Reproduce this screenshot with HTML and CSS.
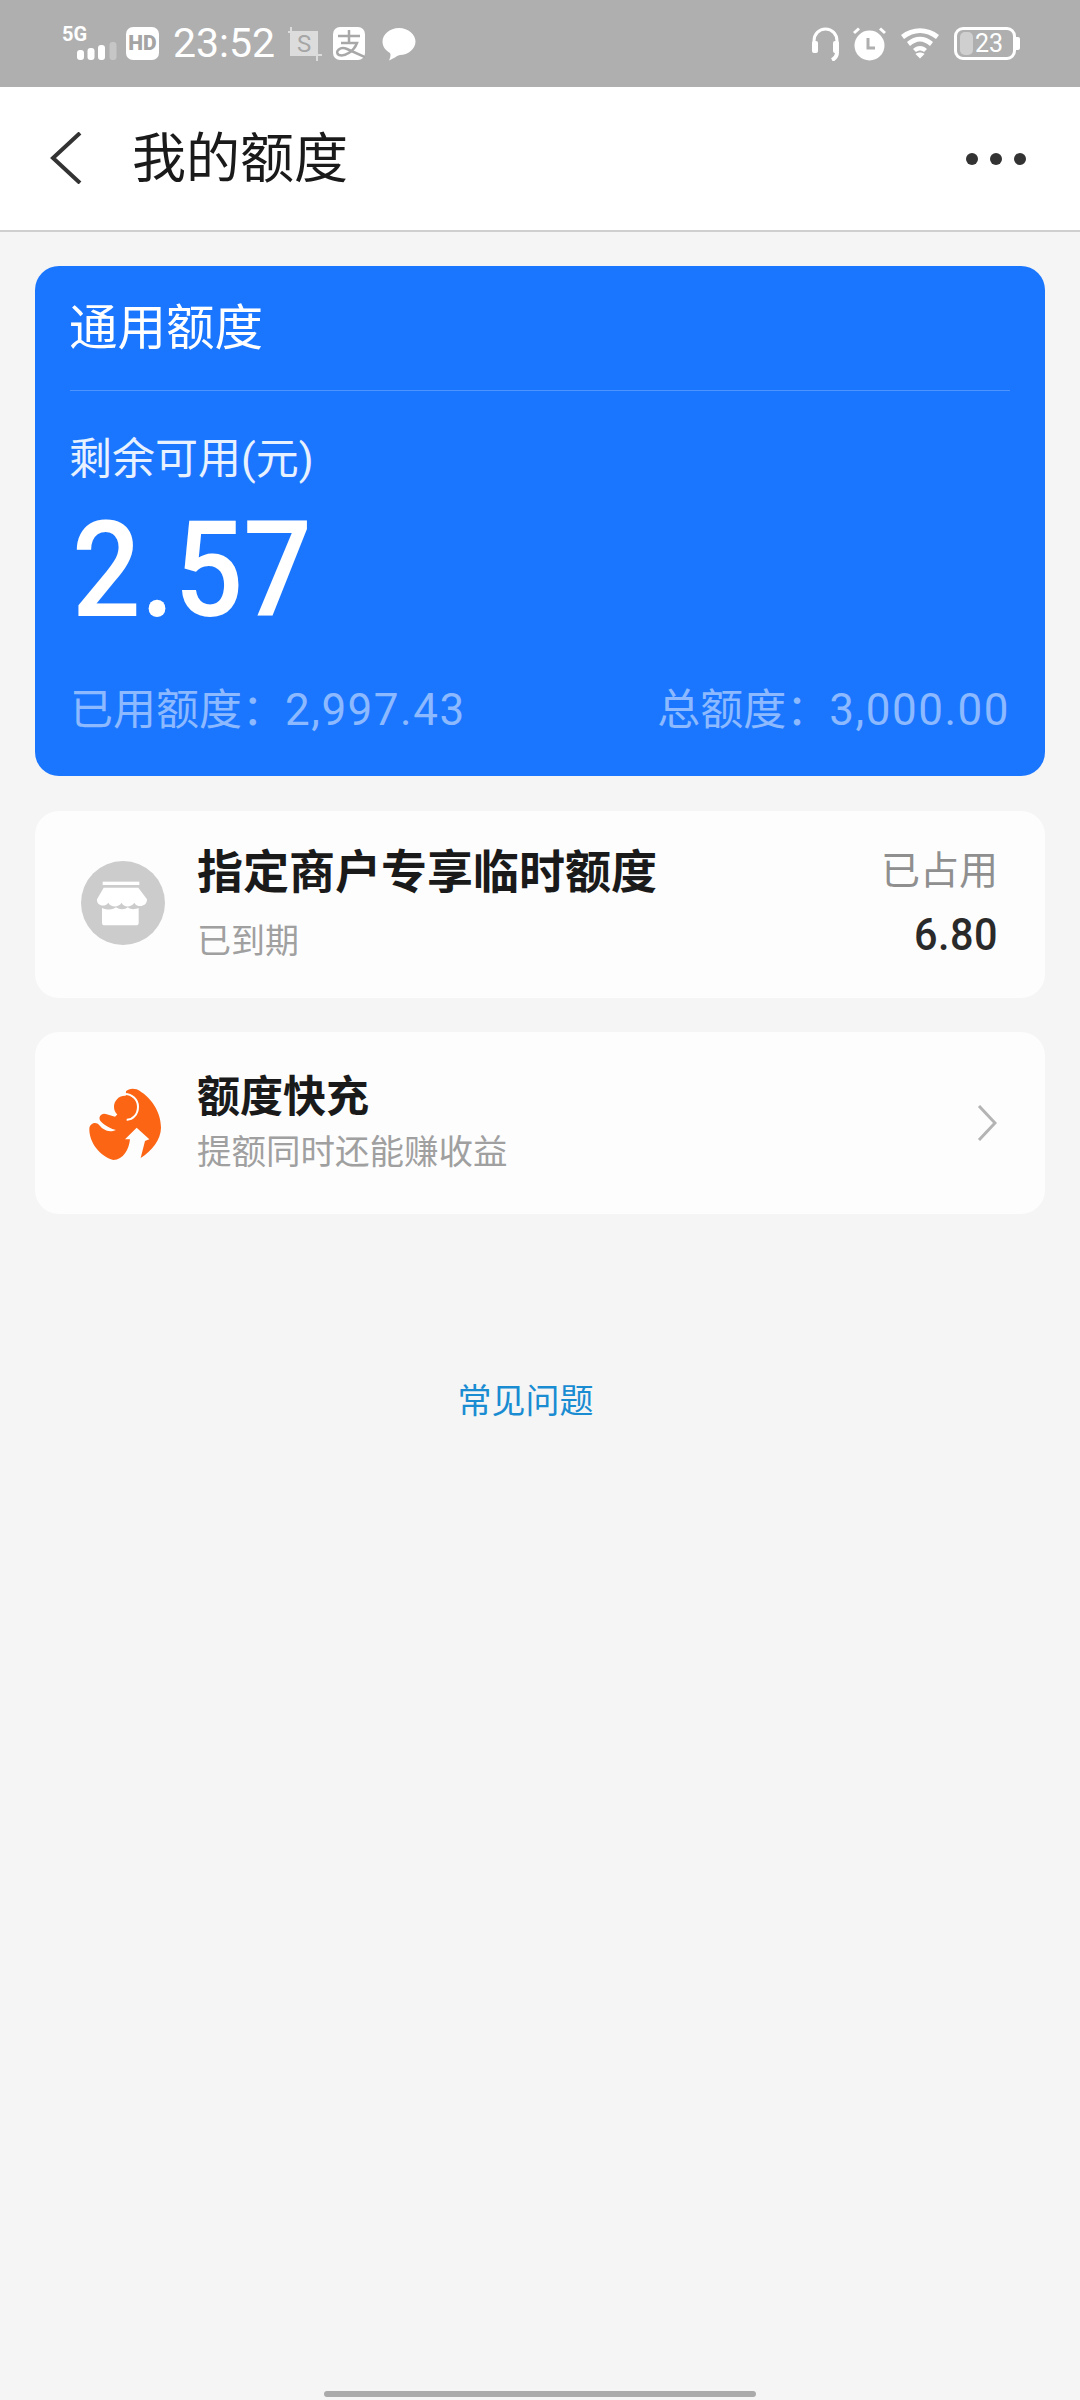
FILE: index.html
```html
<!DOCTYPE html>
<html lang="zh-CN">
<head>
    <meta charset="UTF-8">
    <meta name="viewport" content="width=device-width, initial-scale=1.0">
    <title>我的额度</title>
    <link rel="stylesheet" href="styles.css">
</head>
<body>
<div class="page">

    <!-- 状态栏 -->
    <div class="status">
        <div class="status-left">
            <div class="net">
                <span class="net-label">5G</span>
                <svg class="net-bars" width="40" height="18" viewBox="0 0 40 18">
                    <rect x="0" y="8" width="7" height="10" rx="3" fill="#fff"/>
                    <rect x="10.500" y="6" width="7" height="12" rx="3" fill="#fff"/>
                    <rect x="21" y="3" width="7" height="15" rx="3" fill="#fff"/>
                    <rect x="32.500" y="0" width="7" height="18" rx="3" fill="#c6c6c6"/>
                </svg>
            </div>
            <span class="hd">HD</span>
            <span class="time">23:52</span>
            <svg class="crop" width="34" height="34" viewBox="0 0 34 34">
                <rect x="3" y="5" width="26" height="23" fill="#dcdcdc"/>
                <path d="M3 0V28H34M0 5H29V34" fill="none" stroke="#dcdcdc" stroke-width="2"/>
                <text x="16" y="25" text-anchor="middle" class="crop-s">S</text>
            </svg>
            <svg class="zfb" width="32" height="33" viewBox="0 0 32 33">
                <rect width="32" height="33" rx="7" fill="#fff"/>
                <path d="M5 9H27M16 3V16M8 16H24C21 24 12 30 6 28C1 25 7 19 14 22L32 30" fill="none" stroke="#a8a8a8" stroke-width="2.500"/>
            </svg>
            <svg class="bubble" width="34" height="34" viewBox="0 0 34 34">
                <path d="M17 1C26.500 1 33.500 7.500 33.500 14.500C33.500 22 26 28 18 28C16 28 13 31 7 33.500C8.500 30.500 9 27.500 8 26C3.500 23.500 0.500 19.500 0.500 14.500C0.500 7.500 7.500 1 17 1Z" fill="#fff"/>
            </svg>
        </div>
        <div class="status-right">
            <svg width="27" height="34" viewBox="0 0 27 34">
                <path d="M2 23V14C2 7 7 2 13.500 2S25 7 25 14V25" fill="none" stroke="#fff" stroke-width="3"/>
                <rect x="0" y="14" width="6" height="12" rx="2" fill="#fff"/>
                <rect x="21" y="14" width="6" height="12" rx="2" fill="#fff"/>
                <path d="M25 25C25 29 24 31 20 33" fill="none" stroke="#fff" stroke-width="4"/>
            </svg>
            <svg width="33" height="34" viewBox="0 0 33 34">
                <circle cx="16.500" cy="18.500" r="15" fill="#fff"/>
                <path d="M1 6L6 1.500M32 6L27 1.500" stroke="#fff" stroke-width="3"/>
                <path d="M15 11V21H22" fill="none" stroke="#afafaf" stroke-width="3"/>
            </svg>
            <svg width="40" height="32" viewBox="0 0 40 32">
                <path d="M1 8C12 -1 28 -1 39 8L36 12C26 4 14 4 4 12Z" fill="#fff"/>
                <path d="M7 15C15 8 25 8 33 15L30 19C23 13 17 13 10 19Z" fill="#fff"/>
                <path d="M13 22C17 18 23 18 27 22L24 25C21 23 19 23 16 25Z" fill="#fff"/>
                <path d="M15.500 27C18 25 22 25 24.500 27L20 31.500Z" fill="#fff"/>
            </svg>
            <div class="battery">
                <div class="battery-body">
                    <span class="battery-fill"></span>
                    <span class="battery-num">23</span>
                </div>
                <span class="battery-nub"></span>
            </div>
        </div>
    </div>

    <!-- 标题栏 -->
    <div class="appbar">
        <svg class="back" width="32" height="52" viewBox="0 0 32 52">
            <path d="M30 1L3 26L30 51" fill="none" stroke="#333" stroke-width="4"/>
        </svg>
        <span class="appbar-title">我的额度</span>
        <div class="dots"><i></i><i></i><i></i></div>
    </div>

    <div class="content">

        <div class="quota">
            <div class="quota-head">通用额度</div>
            <div class="quota-label">剩余可用(元)</div>
            <div class="quota-num">2.57</div>
            <div class="quota-foot">
                <span>已用额度：<b>2,997.43</b></span>
                <span>总额度：<b>3,000.00</b></span>
            </div>
        </div>

        <div class="card merchant">
            <svg class="shop" width="86" height="86" viewBox="72 62 258 258">
                <circle cx="198" cy="191" r="126" fill="#cccccc"/>
                <rect x="137" y="127" width="110" height="10" fill="#fff"/>
                <path d="M140 145H244L270 180C270 205 238 205 232 190C222 205 200 205 194 190C184 205 162 205 154 190C144 205 118 200 120 180Z" fill="#fff"/>
                <path d="M135 206C155 214 170 210 177 204C187 212 205 212 212 204C222 212 235 210 245 206V250Q245 258 237 258H143Q135 258 135 250Z" fill="#fff"/>
            </svg>
            <div class="card-text">
                <div class="merchant-title">指定商户专享临时额度</div>
                <div class="merchant-sub">已到期</div>
            </div>
            <div class="merchant-right">
                <div class="used-label">已占用</div>
                <div class="used-num">6.80</div>
            </div>
        </div>

        <div class="card quick">
            <svg class="logo" width="84" height="80" viewBox="0 0 252 240">
                <path d="M138 16C145 8 158 6 170 10C210 30 243 75 243 125C243 160 215 195 182 216L195 165L208 160L170 125L135 160L150 160C147 190 130 222 100 222C60 212 28 170 28 130C28 112 48 105 58 118C68 130 85 142 108 132C95 130 75 120 62 106C52 92 66 78 80 85L105 92L135 62Z" fill="#fb6514"/>
                <path d="M132 24C156 22 174 42 174 62C174 85 158 102 140 101" fill="none" stroke="#fff" stroke-width="6"/>
                <circle cx="135" cy="62" r="33" fill="#fb6514"/>
            </svg>
            <div class="card-text">
                <div class="quick-title">额度快充</div>
                <div class="quick-sub">提额同时还能赚收益</div>
            </div>
            <svg class="arrow" width="20" height="36" viewBox="0 0 20 36">
                <path d="M2 1L18 18L2 35" fill="none" stroke="#b4b4b4" stroke-width="3"/>
            </svg>
        </div>

        <div class="faq">常见问题</div>
    </div>

    <div class="home"></div>
</div>
</body>
</html>
```

FILE: styles.css
```css
* {
    box-sizing: border-box;
}
body {
    margin: 0;
    background-color: #f5f5f5;
    font-family: "Roboto", "Noto Sans CJK SC", sans-serif;
}
.page {
    width: 1080px;
    height: 2400px;
    display: flex;
    flex-direction: column;
}

/* 状态栏 */
.status {
    height: 87px;
    flex-shrink: 0;
    background-color: #afafaf;
    padding: 27px 60px 0 62px;
    display: flex;
    justify-content: space-between;
    align-items: flex-start;
}
.status-left {
    display: flex;
    align-items: flex-start;
}
.status-right {
    display: flex;
    align-items: flex-start;
    gap: 14px;
}
.net {
    width: 54px;
    height: 33px;
    display: flex;
    flex-direction: column;
    align-items: flex-start;
}
.net-label {
    font-weight: bold;
    font-size: 20px;
    line-height: 15px;
    color: #fff;
}
.net-bars {
    margin-left: 15px;
    flex-shrink: 0;
}
.hd {
    width: 33px;
    height: 33px;
    margin-left: 10px;
    border-radius: 7px;
    background-color: #fff;
    color: #a4a4a4;
    font-weight: 900;
    font-size: 21px;
    line-height: 33px;
    text-align: center;
}
.time {
    margin-left: 14px;
    font-size: 41px;
    line-height: 33px;
    color: #fff;
}
.crop {
    margin-left: 13px;
}
.crop-s {
    font-family: "Roboto", sans-serif;
    font-size: 24px;
    fill: #a6a6a6;
}
.zfb {
    margin-left: 11px;
}
.bubble {
    margin-left: 17px;
}
.battery {
    display: flex;
    align-items: center;
    height: 33px;
}
.battery-body {
    width: 62px;
    height: 33px;
    border: 3px solid #fff;
    border-radius: 9px;
    padding: 2px 3px;
    display: flex;
    align-items: center;
    gap: 2px;
}
.battery-fill {
    width: 13px;
    height: 23px;
    border-radius: 5px;
    background-color: #cfcfcf;
}
.battery-num {
    font-size: 25px;
    line-height: 23px;
    color: #fff;
}
.battery-nub {
    width: 4px;
    height: 13px;
    border-radius: 0 2px 2px 0;
    background-color: #fff;
}

/* 标题栏 */
.appbar {
    height: 145px;
    flex-shrink: 0;
    background-color: #fff;
    border-bottom: 2px solid #cfcfcf;
    padding: 0 54px 0 50px;
    display: flex;
    align-items: center;
}
.back {
    margin-top: -2px;
}
.appbar-title {
    margin: 2px 0 0 50px;
    font-size: 54px;
    line-height: 60px;
    color: #1a1a1a;
}
.dots {
    margin-left: auto;
    display: flex;
    gap: 12px;
}
.dots i {
    width: 12px;
    height: 12px;
    border-radius: 50%;
    background-color: #333;
}

/* 内容 */
.content {
    flex: 1;
    padding: 34px 35px 0;
    display: flex;
    flex-direction: column;
}
.quota {
    height: 510px;
    flex-shrink: 0;
    border-radius: 24px;
    background-color: #1a76ff;
    padding: 0 35px;
    color: #fff;
}
.quota-head {
    height: 125px;
    padding-top: 33px;
    border-bottom: 1px solid #4d94ff;
    font-size: 48.500px;
    line-height: 60px;
    text-indent: -1px;
}
.quota-label {
    margin-top: 43px;
    font-size: 43px;
    line-height: 50px;
    text-indent: -1px;
    color: #e8f1ff;
}
.quota-num {
    margin: 17px 0 0 2px;
    font-weight: 500;
    font-size: 133px;
    line-height: 140px;
    transform: scaleX(0.91);
    transform-origin: left;
}
.quota-foot {
    margin-top: 44px;
    display: flex;
    justify-content: space-between;
    font-size: 43px;
    line-height: 50px;
    color: #8cb9ff;
}
.quota-foot b {
    font-weight: normal;
    font-size: 44px;
    letter-spacing: 1.500px;
}
.card {
    margin-top: 35px;
    border-radius: 24px;
    background-color: #fdfdfd;
    display: flex;
    align-items: center;
    flex-shrink: 0;
}
.merchant {
    height: 187px;
    padding: 0 47px 0 46px;
}
.quick {
    margin-top: 34px;
    height: 182px;
    padding: 0 48px 0 45px;
}
.shop {
    margin-top: -3px;
}
.card-text {
    flex: 1;
}
.merchant .card-text {
    margin-left: 30px;
}
.merchant-title {
    margin-top: -4px;
    font-size: 46px;
    line-height: 60px;
    font-weight: bold;
    color: #1a1a1a;
}
.merchant-sub {
    margin-top: 17px;
    font-size: 34px;
    line-height: 44px;
    color: #a0a0a0;
}
.merchant-right {
    margin-top: -4px;
    text-align: right;
}
.used-label {
    font-size: 39px;
    line-height: 50px;
    color: #8f8f8f;
}
.used-num {
    margin-top: 14px;
    font-weight: 500;
    font-size: 45px;
    line-height: 50px;
    color: #2a2a2a;
    letter-spacing: 0.500px;
    transform: scaleX(0.92);
    transform-origin: right;
}
.logo {
    margin-top: 5px;
}
.quick .card-text {
    margin-left: 33px;
}
.quick-title {
    font-size: 43px;
    line-height: 52px;
    font-weight: bold;
    color: #1a1a1a;
}
.quick-sub {
    margin-top: 6px;
    font-size: 34.500px;
    line-height: 46px;
    color: #a0a0a0;
}
.faq {
    margin-top: 162px;
    padding-right: 29px;
    text-align: center;
    font-size: 34px;
    line-height: 50px;
    color: #1a8cd2;
}
.home {
    width: 432px;
    height: 6px;
    margin: 0 auto 3px;
    border-radius: 3px;
    background-color: #aaa;
    flex-shrink: 0;
}
```
